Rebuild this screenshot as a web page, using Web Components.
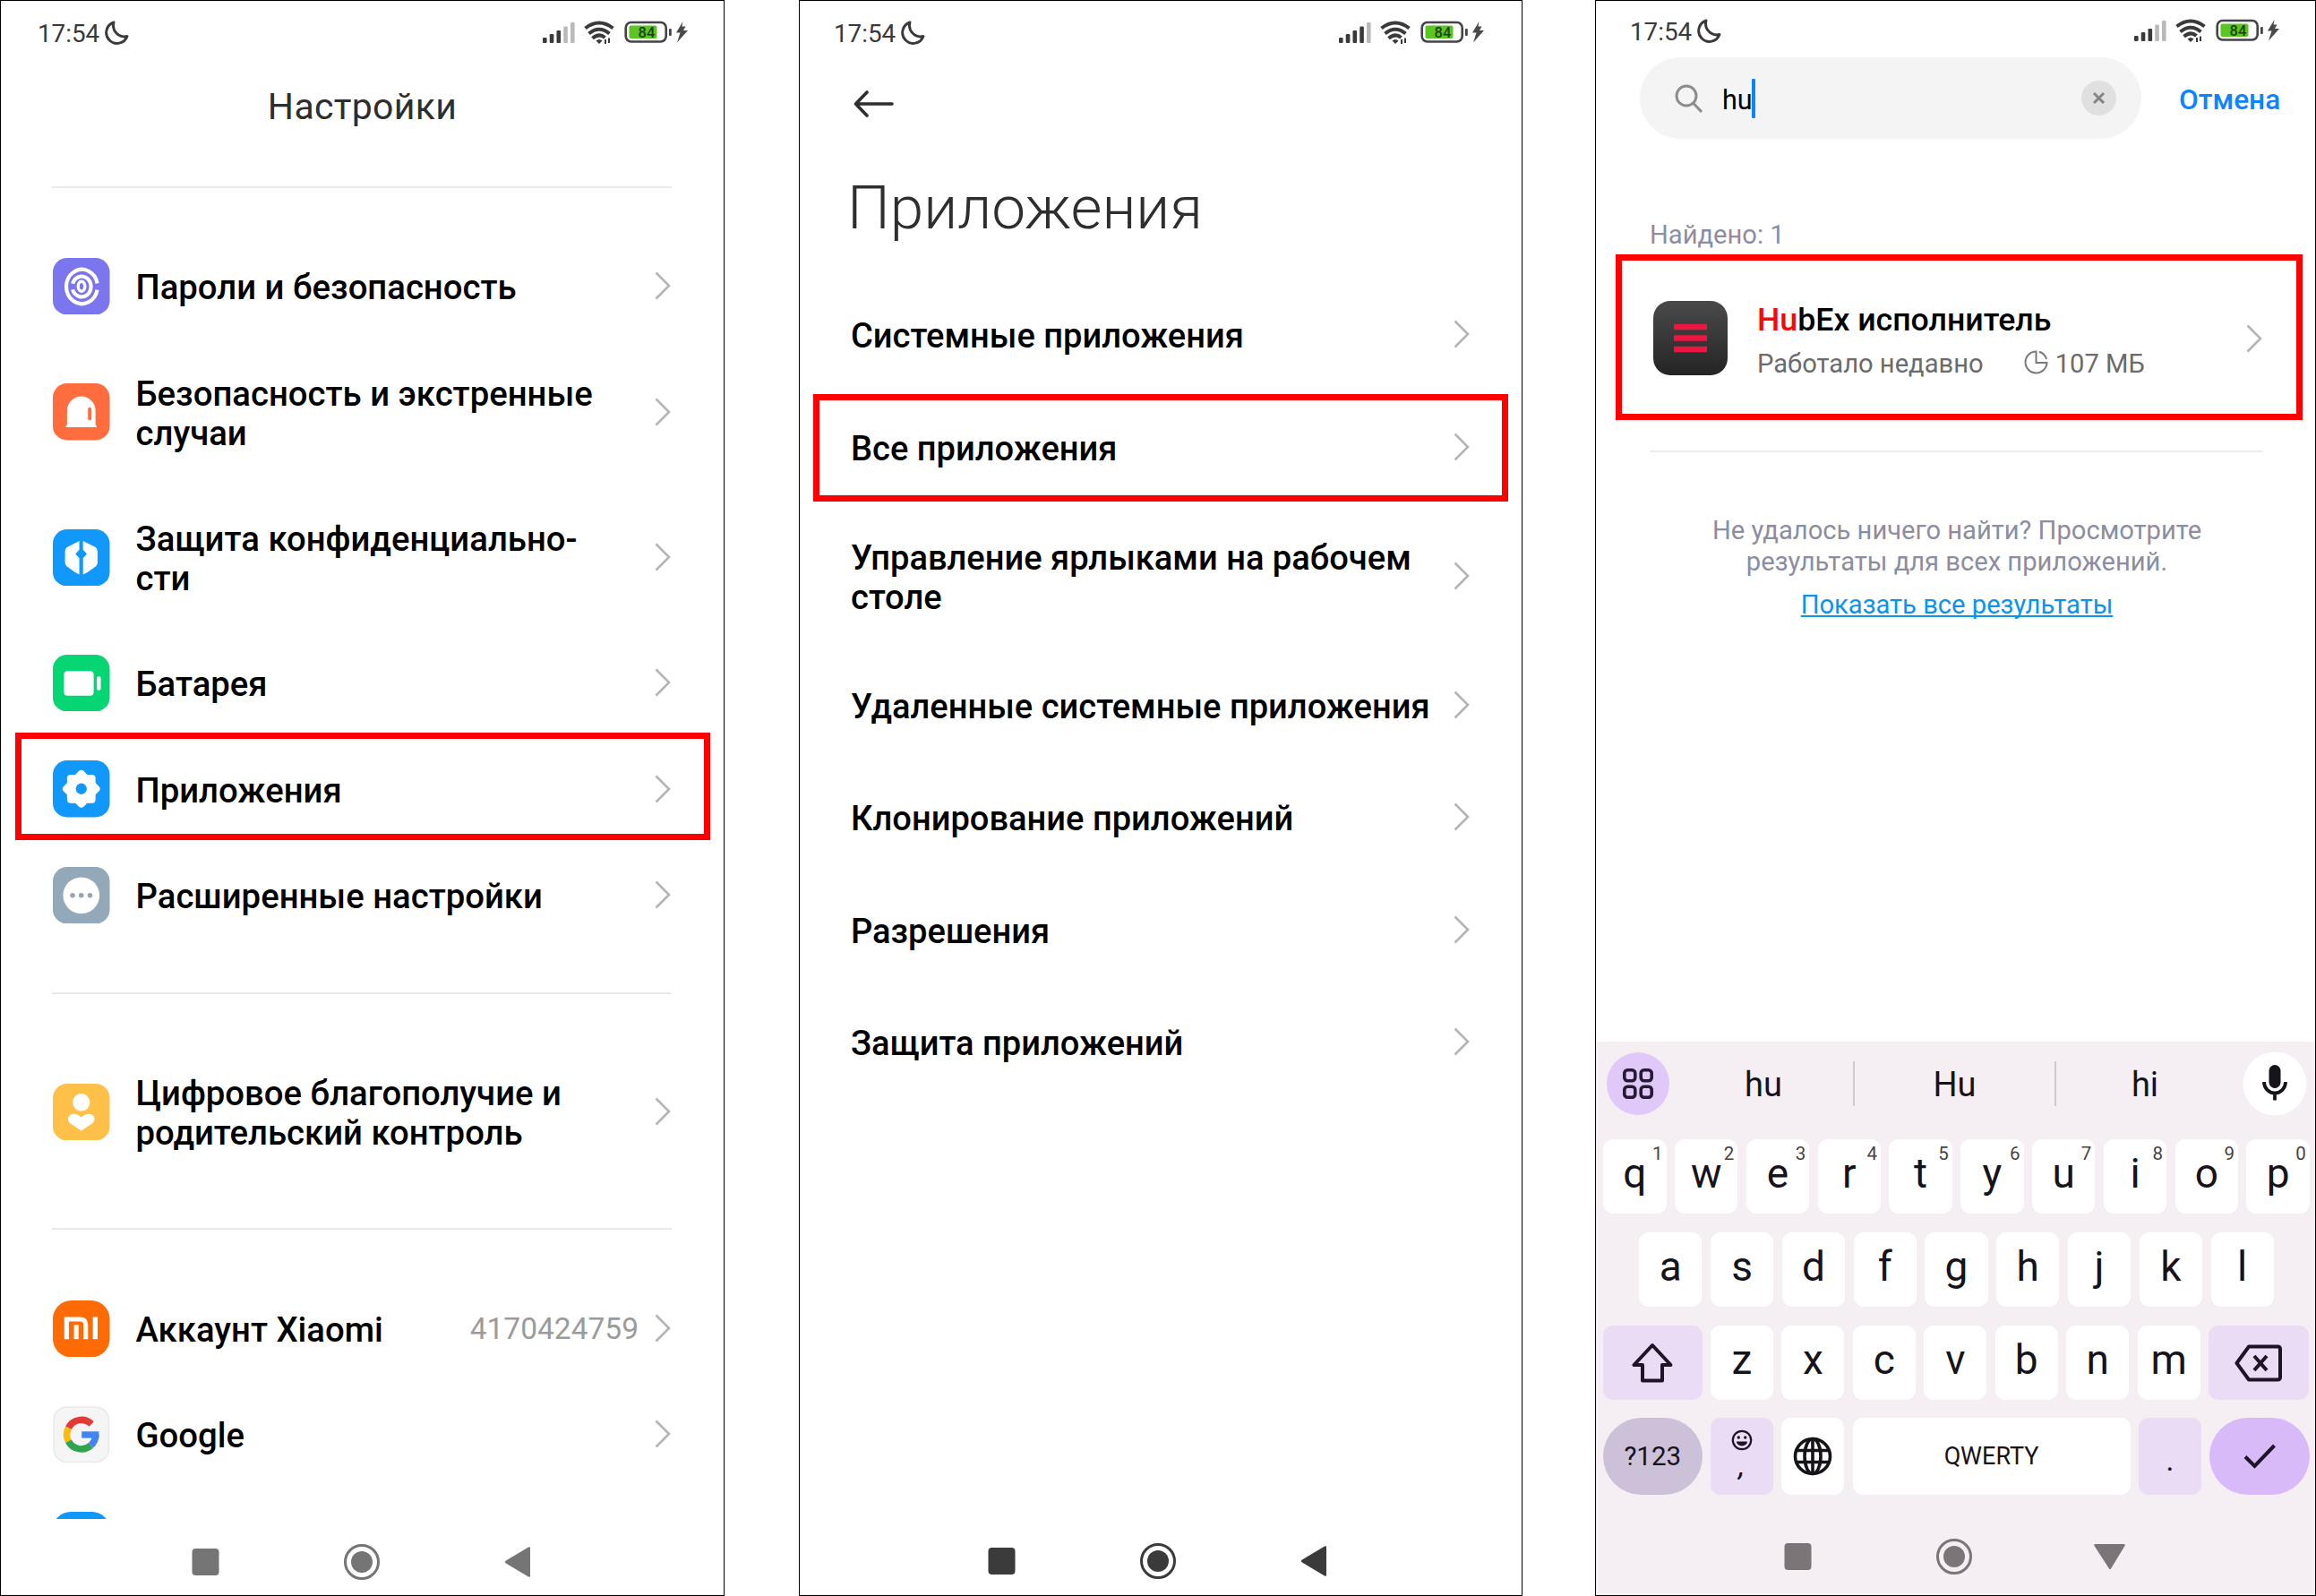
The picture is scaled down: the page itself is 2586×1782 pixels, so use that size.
<!DOCTYPE html>
<html lang="ru">
<head>
<meta charset="utf-8">
<title>Настройки</title>
<style>
  html, body { margin: 0; background: #fff; }
  body {
    width: 2586px; height: 1782px; overflow: hidden;
    display: flex; align-items: stretch;
    font-family: Roboto, "Noto Sans", sans-serif; color: #000;
  }
  phone-frame:nth-of-type(1) { width: 809px; }
  phone-frame:nth-of-type(2) { width: 808px; margin-left: 83px; --label: 38.100px; }
  phone-frame:nth-of-type(3) { width: 805px; margin-left: 81px; }
</style>
</head>
<body>

<phone-frame>
  <status-bar style="--left:41px;--end:768px;--top:21px" bars="3"></status-bar>
  <center-title>Настройки</center-title>
  <list-divider style="--before:65px;--after:50px"></list-divider>
  <settings-row style="--h:118px" icon="finger">Пароли и безопасность</settings-row>
  <settings-row style="--h:163px" icon="siren">Безопасность и экстренные<br>случаи</settings-row>
  <settings-row style="--h:162px" icon="shield">Защита конфиденциально-<br>сти</settings-row>
  <settings-row style="--h:118px" icon="battery">Батарея</settings-row>
  <settings-row style="--h:119px;--mark-top:-3px;--mark-bottom:2px;--mark-left:16px;--mark-right:15px" icon="gear" marked>Приложения</settings-row>
  <settings-row style="--h:118px" icon="dots">Расширенные настройки</settings-row>
  <list-divider style="--before:50px;--after:50px"></list-divider>
  <settings-row style="--h:162px" icon="wellbeing">Цифровое благополучие и<br>родительский контроль</settings-row>
  <list-divider style="--before:49px;--after:51px"></list-divider>
  <settings-row style="--h:118px" icon="mi">Аккаунт Xiaomi<span slot="value">4170424759</span></settings-row>
  <settings-row style="--h:118px" icon="google">Google</settings-row>
  <settings-row style="--h:118px;--show:36px" icon="blank" cut></settings-row>
  <nav-bar style="--c:#757575;--first:212px;height:75px"></nav-bar>
</phone-frame>

<phone-frame>
  <status-bar style="--left:38px;--end:765px;--top:21px" bars="4"></status-bar>
  <back-title>Приложения</back-title>
  <settings-row style="--h:126px;--pl:57px;--pr:57px">Системные приложения</settings-row>
  <settings-row style="--h:125px;--pl:57px;--pr:57px;--mark-top:4px;--mark-bottom:1px;--mark-left:15px;--mark-right:15px" marked>Все приложения</settings-row>
  <settings-row style="--h:163px;--pl:57px;--pr:57px">Управление ярлыками на рабочем<br>столе</settings-row>
  <settings-row style="--h:125px;--pl:57px;--pr:57px">Удаленные системные приложения</settings-row>
  <settings-row style="--h:126px;--pl:57px;--pr:57px">Клонирование приложений</settings-row>
  <settings-row style="--h:125px;--pl:57px;--pr:57px">Разрешения</settings-row>
  <settings-row style="--h:126px;--pl:57px;--pr:57px">Защита приложений</settings-row>
  <nav-bar style="--c:#3b3b3b;--first:209px"></nav-bar>
</phone-frame>

<phone-frame>
  <status-bar style="--left:38px;--end:764px;--top:19px;--bar-h:63px" bars="3"></status-bar>
  <search-head value="hu">Отмена</search-head>
  <search-results></search-results>
  <soft-keyboard></soft-keyboard>
</phone-frame>

<script>
const define = (name, html) => customElements.define(name, class extends HTMLElement {
  constructor() {
    super();
    const t = document.createElement('template');
    t.innerHTML = typeof html === 'function' ? html(this) : html;
    this.attachShadow({ mode: 'open' }).append(t.content.cloneNode(true));
  }
});

const chevron = `<svg class="chev" width="20" height="32" viewBox="0 0 20 32" fill="none" stroke="#b4b4b4" stroke-width="2.6"><path d="M2.500 1.500 17 16 2.500 30.500"/></svg>`;

const ICONS = {
  finger: `<rect width="64" height="64" rx="16" fill="#7b76ee"/><g fill="none" stroke="#fff" stroke-width="4.200">
    <path d="M50 28.500A17.600 19.300 0 1 0 50 36"/><path d="M22.300 29A10.500 11.500 0 1 1 22.300 35.500"/><ellipse cx="32.300" cy="32" rx="3.800" ry="5.500" stroke-width="3.400"/></g>`,
  siren: `<rect width="64" height="64" rx="16" fill="#ff6c3e"/><path d="M16 46V31a16 16.500 0 0 1 32 0v15l1.500 3.500h-35z" fill="#fff"/><rect x="39.500" y="27" width="4" height="14.500" rx="2" fill="#ff6c3e"/>`,
  shield: `<rect width="64" height="64" rx="16" fill="#1098fb"/><path d="M29.800 13v10l-4.300 4.700 4.300 4.700v18.600L25 48.500 15.500 41.500q-1.800-1.500-1.800-4V25q0-2.500 1.800-4.500zM34 13v10l4.300 4.700-4.300 4.700v18.600L39 48.500l9.500-7q1.800-1.500 1.800-4V25q0-2.500-1.800-4.500z" fill="#fff"/>`,
  battery: `<rect width="64" height="64" rx="16" fill="#05d572"/><rect x="12.500" y="18.500" width="33.500" height="27.500" rx="4" fill="#fff"/><rect x="49.500" y="24.500" width="4.500" height="15.500" rx="1.800" fill="#fff"/>`,
  gear: `<rect width="64" height="64" rx="16" fill="#1098fb"/><g fill="#fff"><rect x="16" y="16" width="32" height="32" rx="4"/><rect x="16" y="16" width="32" height="32" rx="4" transform="rotate(45 32 32)"/></g><circle cx="32" cy="32" r="6.200" fill="#1098fb"/>`,
  dots: `<rect width="64" height="64" rx="16" fill="#93a8b8"/><circle cx="32" cy="32" r="20.500" fill="#fff"/><g fill="#9aa5ae"><circle cx="22.200" cy="32" r="2.800"/><circle cx="32" cy="32" r="2.800"/><circle cx="41.800" cy="32" r="2.800"/></g>`,
  wellbeing: `<rect width="64" height="64" rx="16" fill="#ffc04a"/><circle cx="32" cy="21" r="9.800" fill="#fff"/><path d="M32 53 19.500 44.500C14.500 40 18 33.500 24 34q5 0.300 8 4 3-3.700 8-4c6-0.500 9.500 6 4.500 10.500z" fill="#fff"/>`,
  mi: `<rect width="64" height="64" rx="21" fill="#fe6a03"/><path d="M15.500 43.500V21.200H30.500Q37 21.200 37 27.500V43.500" fill="none" stroke="#fff" stroke-width="5.200"/><rect x="23.800" y="27.500" width="5.200" height="16" fill="#fff"/><rect x="45" y="18.600" width="5.400" height="24.900" fill="#fff"/>`,
  google: `<rect x="1" y="1" width="62" height="62" rx="15" fill="#f5f5f6" stroke="#e9e9ea" stroke-width="1.500"/><g fill="none" stroke-width="7.600">
    <path d="M43.500 20.200A16.200 16.200 0 0 0 17.600 24.500" stroke="#e33b33"/><path d="M17.600 24.500A16.200 16.200 0 0 0 17.600 39.500" stroke="#f9bb0c"/>
    <path d="M17.600 39.500A16.200 16.200 0 0 0 42.700 44.200" stroke="#31a350"/><path d="M42.700 44.200A16.200 16.200 0 0 0 48.200 32" stroke="#4083f1"/></g><rect x="32.500" y="28.500" width="19.300" height="7.400" fill="#4083f1"/>`,
  blank: `<rect width="64" height="64" rx="20" fill="#1098fb"/>`
};

define('phone-frame', `<style>
  :host { display: flex; flex-direction: column; box-sizing: border-box; height: 1782px; border: 1px solid #000; background: #fff; flex: none; overflow: hidden; }
</style><slot></slot>`);

define('status-bar', el => {
  const on = +el.getAttribute('bars');
  const hs = [6, 10, 14, 18.500, 23];
  const bars = hs.map((h, i) => `<rect x="${i * 7.750}" y="${25 - h}" width="4.600" height="${h}" rx="1.200" fill="${i < on ? '#3a3a3a' : '#b9b9b9'}"/>`).join('');
  return `<style>
  :host { display: flex; flex: none; align-items: flex-start; justify-content: space-between; box-sizing: border-box; width: var(--end); height: var(--bar-h, 72px); padding: var(--top) 0 0 var(--left); }
  .l { display: flex; gap: 6px; color: #3a3a3a; font-size: 27.800px; line-height: 32px; }
  svg { display: block; } .l svg { margin-top: 1px; } .r { margin-top: 1px; }
  </style>
  <div class="l"><span>17:54</span><svg width="27" height="27" viewBox="0 0 27 27"><path d="M10 2A12 12 0 1 0 25 17.500 12.500 12.500 0 0 1 10 2z" fill="none" stroke="#3a3a3a" stroke-width="2.900" stroke-linejoin="round"/></svg></div>
  <svg class="r" width="163" height="28" viewBox="0 0 163 28">${bars}
    <g fill="none" stroke="#3a3a3a" stroke-width="4"><path d="M47.500 8.500Q63 -3.500 78.500 8.500"/><path d="M51.500 14.500Q63 5 74.500 14.500"/><path d="M55.500 19.800Q63 13.500 69.500 19"/></g>
    <path d="M59.500 22.500Q63 19.500 66.500 22.500L63 26z" fill="#3a3a3a"/>
    <path d="M70 21v5M74 19.500v5.500" stroke="#3a3a3a" stroke-width="2"/>
    <rect x="92.700" y="2" width="45" height="21.500" rx="6" fill="#fff" stroke="#45434a" stroke-width="2.600"/>
    <rect x="96.500" y="5.500" width="31" height="14.500" rx="2" fill="#5cc522"/><rect x="141" y="9" width="2.800" height="8" rx="1" fill="#45434a"/>
    <text x="116" y="19" text-anchor="middle" font-size="16.500" font-weight="500" fill="#17440b">84</text>
    <path d="M156.500 1 149 13.500h4.500L150 24.500 162 11h-5l2.500-4.500h-4z" fill="#4a4a4a"/>
  </svg>`;
});

define('center-title', `<style>
  :host { display: block; flex: none; margin-top: 22px; height: 48px; line-height: 48px; font-size: 41px; font-weight: 450; letter-spacing: 0.300px; text-align: center; color: #2e2e2e; }
</style><slot></slot>`);

define('list-divider', `<style>
  :host { display: block; flex: none; height: 2px; background: #e9e9e9; margin: var(--before) 58px var(--after) 57px; }
</style>`);

define('settings-row', el => `<style>
  :host { position: relative; display: flex; flex: none; align-items: center; box-sizing: border-box; height: var(--h); padding: 0 var(--pr, 58px) 0 var(--pl, 58px); }
  :host([cut]) { height: var(--show); overflow: hidden; align-items: flex-start; padding-top: 27px; }
  :host([cut]) .chev { display: none; }
  :host([marked])::after { content: ""; position: absolute; inset: var(--mark-top) var(--mark-right) var(--mark-bottom) var(--mark-left); border: 7px solid #fe0000; }
  .ico { flex: none; margin: 1px 29px 0 0; display: block; }
  .t { flex: 1; white-space: nowrap; padding-top: 4px; font-size: var(--label, 38.300px); line-height: 44px; font-weight: 500; }
  ::slotted([slot=value]) { font-size: 33.500px; color: #9b9b9b; margin-right: 17px; }
  .chev { flex: none; display: block; }
</style>${el.getAttribute('icon') ? `<svg class="ico" width="63.500" height="63.500" viewBox="0 0 64 64">${ICONS[el.getAttribute('icon')]}</svg>` : ''}
<div class="t"><slot></slot></div><slot name="value"></slot>${chevron}`);

define('nav-bar', el => `<style>
  :host { display: flex; flex: none; align-items: center; margin-top: auto; height: 76px; padding-left: var(--first); color: var(--c); }
  svg { display: block; flex: none; }
</style><svg width="390" height="42" viewBox="0 0 390 42" fill="currentColor">
  <rect x="1.500" y="6" width="30" height="30" rx="4"/><circle cx="191" cy="21" r="18.500" fill="none" stroke="currentColor" stroke-width="3"/><circle cx="191" cy="21" r="12"/>
  ${el.hasAttribute('down') ? '<path d="M348.500 7h32q2 0 1 2L366 34.500q-1 1.500-2 0L347.500 9q-1-2 1-2z"/>' : '<path d="M379 5.500v31q0 2-2 1L351.500 22.300q-1.500-1.300 0-2.600L377 4.500q2-1 2 1z"/>'}</svg>`);

define('back-title', `<style>
  :host { display: flex; flex-direction: column; flex: none; height: 237px; color: #2e2e2e; }
  svg { display: block; margin: 28px 0 0 60px; flex: none; }
  .h { font-weight: 300; font-size: 67.500px; line-height: 78px; margin: 62px 0 0 53px; white-space: nowrap; }
</style><svg width="46" height="30" viewBox="0 0 46 30" fill="none" stroke="#2e2e2e" stroke-width="3.600" stroke-linecap="round" stroke-linejoin="round"><path d="M15 2 2.500 15 15 28M2.500 15H43"/></svg>
<div class="h"><slot></slot></div>`);

define('search-head', el => `<style>
  :host { display: flex; flex: none; align-items: center; height: 91px; padding-left: 49px; }
  .pill { display: flex; align-items: center; box-sizing: border-box; width: 560px; height: 91px; border-radius: 46px; background: #f4f4f4; padding: 0 28px 0 39px; }
  .v { font-size: 30.500px; font-weight: 450; margin-left: 21px; margin-right: -1px; padding-top: 3px; } .cur { width: 4px; height: 44px; background: #0d84ff; border-radius: 1px; }
  .x { margin-left: auto; } svg { display: block; }
  .cancel { font-size: 31.600px; font-weight: 500; color: #0d84ff; margin-left: 42px; padding-top: 3px; }
</style><div class="pill"><svg width="32" height="32" viewBox="0 0 32 32" fill="none" stroke="#8c8c8c" stroke-width="3"><circle cx="13" cy="13" r="11"/><path d="M20.500 21 30 31"/></svg>
<span class="v">${el.getAttribute('value')}</span><span class="cur"></span>
<svg class="x" width="39" height="39" viewBox="0 0 39 39"><circle cx="19.500" cy="19.500" r="19.500" fill="#e0e0e0"/><path d="M14 14l11 11m0-11l-11 11" stroke="#858585" stroke-width="3"/></svg></div>
<div class="cancel"><slot></slot></div>`);

define('search-results', `<style>
  :host { display: flex; flex-direction: column; flex: none; height: 1008px; font-size: 29.150px; color: #8b8ea0; }
  .found { margin: 90px 0 0 60px; line-height: 34px; height: 39px; }
  .row { position: relative; display: flex; align-items: center; height: 185px; padding-left: 64px; }
  .row::after { content: ""; position: absolute; inset: 0 14px 0 22px; border: 7px solid #fe0000; }
  .row > svg:first-child { margin-top: 2px; }
  .txt { margin-left: 33px; padding-top: 6px; flex: none; white-space: nowrap; }
  .name { font-size: 35.700px; font-weight: 500; color: #000; line-height: 42px; } .name b { font-weight: 500; color: #f40808; }
  .sub { display: flex; align-items: center; color: #6b6b6b; line-height: 34px; margin-top: 11px; }
  .sub svg { margin: -3px 8px 0 45px; } svg { display: block; }
  .chev { margin: 2px 58px 0 auto; }
  .line { height: 2px; background: #ececec; margin: 34px 58px 0 60px; }
  .none { text-align: center; line-height: 34.500px; margin: 70px 0 0 3px; }
  .link { display: block; text-align: center; margin: 14px 0 0 3px; line-height: 34px; color: #0d93e8; text-decoration: underline; text-decoration-thickness: 2px; text-underline-offset: 2px; text-decoration-skip-ink: none; }
</style>
<div class="found">Найдено: 1</div>
<div class="row">
  <svg width="83" height="83" viewBox="0 0 83 83"><defs><linearGradient id="g" x2="0" y2="1"><stop stop-color="#4a4a4a"/><stop offset="1" stop-color="#242424"/></linearGradient></defs><rect width="83" height="83" rx="19" fill="url(#g)"/><path d="M23 29h37M23 41.500h37M23 54h37" stroke="#ee1540" stroke-width="6.500"/></svg>
  <div class="txt"><div class="name"><b>Hu</b>bEx исполнитель</div>
  <div class="sub"><span>Работало недавно</span><svg width="27" height="27" viewBox="0 0 27 27" fill="none" stroke="#7a7a7a" stroke-width="2"><path d="M13.500 1.500A12 12 0 1 0 25.500 14H13.500z"/><path d="M17 1.800A12 12 0 0 1 25 10"/></svg><span>107 МБ</span></div></div>
  ${chevron}
</div>
<div class="line"></div>
<div class="none">Не удалось ничего найти? Просмотрите<br>результаты для всех приложений.</div>
<a class="link">Показать все результаты</a>`);

define('key-cap', `<style>
  :host { position: relative; display: flex; align-items: center; justify-content: center; box-sizing: border-box; flex: 0 0 70.300px; height: 100%; border-radius: 11px; background: #fff; font-size: 46px; color: #17131a; padding-bottom: 8px; }
  :host([wide]) { flex-basis: 110.500px; }
  :host([space]) { flex: 1; font-size: 27px; padding: 0; }
  :host([tone=soft]) { background: #ebdcf6; }
  :host([tone=mode]) { background: #cdc0d9; border-radius: 43px; font-size: 29.500px; font-weight: 450; padding: 0; }
  :host([tone=go]) { background: #d9baf9; border-radius: 43px; }
  :host([pic]) { padding: 0; }
  .n { display: block; position: absolute; top: 4px; right: 4px; font-size: 20.500px; line-height: 24px; color: #464147; }
</style><slot></slot><slot name="n" class="n"></slot>`);

define('soft-keyboard', () => {
  const k = (c, n) => `<key-cap>${c}${n ? `<span slot="n">${n}</span>` : ''}</key-cap>`;
  return `<style>
  :host { display: flex; flex-direction: column; flex: 1; background: #f5eff3; color: #17131a; }
  .sug { display: flex; align-items: center; height: 70px; padding: 12px 9px 0 12px; font-size: 38px; }
  .sug > svg { flex: none; display: block; } .s { text-align: center; padding-top: 2px; }
  .s1 { width: 200px; padding-left: 5px; } .s2 { width: 223px; } .s3 { flex: 1; padding-right: 10px; }
  .bar { width: 2px; height: 50px; background: #d0cad0; }
  .row { display: flex; gap: 9.500px; height: 83px; margin: 21px 6px 0 8px; justify-content: center; }
  .row.first { margin-top: 27px; } .row.third, .row.last { gap: 9.200px; justify-content: flex-start; }
  .row.last { height: 86px; margin-top: 20px; }
  .row key-cap[wide]:last-child { flex-basis: 111.700px; }
  svg { display: block; }
  .emo { display: flex; flex-direction: column; align-items: center; font-size: 34px; line-height: 34px; height: 60px; }
  .emo span { margin-top: -1px; font-style: italic; }
  .dot { font-size: 34px; padding-top: 8px; }
  </style>
  <div class="sug">
    <svg width="70" height="70" viewBox="0 0 70 70"><circle cx="35" cy="35" r="35" fill="#e0c8f8"/><g fill="none" stroke="#271a35" stroke-width="3.600"><rect x="19.800" y="19.800" width="12" height="12" rx="3.500"/><rect x="38.200" y="19.800" width="12" height="12" rx="3.500"/><rect x="19.800" y="38.200" width="12" height="12" rx="3.500"/><rect x="38.200" y="38.200" width="12" height="12" rx="3.500"/></g></svg>
    <div class="s s1">hu</div><div class="bar"></div>
    <div class="s s2">Hu</div><div class="bar"></div>
    <div class="s s3">hi</div>
    <svg width="72" height="72" viewBox="0 0 72 72"><circle cx="36" cy="36" r="35.500" fill="#fff"/><rect x="29.500" y="15" width="13" height="26" rx="6.500" fill="#17131a"/><path d="M24 34a12 12.500 0 0 0 24 0M36 46v8.500" fill="none" stroke="#17131a" stroke-width="3.800"/></svg>
  </div>
  <div class="row first">${[...'qwertyuiop'].map((c, i) => k(c, String((i + 1) % 10))).join('')}</div>
  <div class="row">${[...'asdfghjkl'].map(c => k(c)).join('')}</div>
  <div class="row third"><key-cap wide pic tone="soft"><svg width="48" height="46" viewBox="0 0 48 46" fill="none" stroke="#1d1426" stroke-width="4" stroke-linejoin="round"><path d="M24 3 3.500 25H13V42.500H35V25H44.500z"/></svg></key-cap>${[...'zxcvbnm'].map(c => k(c)).join('')}<key-cap wide pic tone="soft"><svg width="54" height="42" viewBox="0 0 54 42" fill="none" stroke="#1d1426" stroke-width="4" stroke-linejoin="round"><path d="M16 2.500H48Q51 2.500 51 5.500V36.500Q51 39.500 48 39.500H16L2.500 21z"/><path d="M22 13 36 29M36 13 22 29"/></svg></key-cap></div>
  <div class="row last"><key-cap wide tone="mode">?123</key-cap>
    <key-cap pic tone="soft"><div class="emo"><svg width="24" height="24" viewBox="0 0 24 24"><circle cx="12" cy="12" r="10.200" fill="none" stroke="#1d1426" stroke-width="2.200"/><circle cx="8.300" cy="9" r="1.700" fill="#1d1426"/><circle cx="15.700" cy="9" r="1.700" fill="#1d1426"/><path d="M6 13.500h12a6 5 0 0 1-12 0z" fill="#1d1426"/></svg><span>,</span></div></key-cap>
    <key-cap pic><svg width="44" height="44" viewBox="0 0 44 44" fill="none" stroke="#17131a" stroke-width="3.600"><circle cx="22" cy="22" r="19.500"/><ellipse cx="22" cy="22" rx="9" ry="19.500"/><path d="M4 15.500H40M4 28.500H40M22 3V41"/></svg></key-cap>
    <key-cap space>QWERTY</key-cap>
    <key-cap pic tone="soft"><span class="dot">.</span></key-cap>
    <key-cap wide pic tone="go"><svg width="38" height="30" viewBox="0 0 38 30" fill="none" stroke="#1d1426" stroke-width="4"><path d="M3 15.500 13.500 26 35.500 3"/></svg></key-cap></div>
  <nav-bar down style="--c:#7b7577;--first:209px;height:87px"></nav-bar>`;
});
</script>
</body>
</html>
